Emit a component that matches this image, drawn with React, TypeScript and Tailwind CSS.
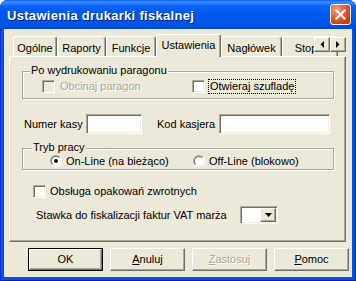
import React from "react";

const raised =
  "border border-t-white border-l-white border-r-[#716F64] border-b-[#716F64] shadow-[inset_-1px_-1px_0_#ACA899]";
const sunken =
  "border border-t-[#ACA899] border-l-[#ACA899] border-r-white border-b-white shadow-[inset_1px_1px_0_#716F64,inset_-1px_-1px_0_#F1EFE2]";
const etched =
  "border border-[#ACA899] shadow-[inset_1px_1px_0_#fff,1px_1px_0_#fff]";
const disabledText = "text-[#ACA899] [text-shadow:1px_1px_0_#fff]";

function Check({ disabled }: { disabled?: boolean }) {
  return (
    <div
      className={`h-[13px] w-[13px] shrink-0 ${sunken} ${disabled ? "bg-[#ECE9D8]" : "bg-white"}`}
    />
  );
}

function Radio({ checked }: { checked?: boolean }) {
  return (
    <div className="relative h-[12px] w-[12px] shrink-0 rounded-full border border-t-[#ACA899] border-l-[#ACA899] border-r-white border-b-white">
      <div className="flex h-full w-full items-center justify-center rounded-full border border-t-[#716F64] border-l-[#716F64] border-r-[#F1EFE2] border-b-[#F1EFE2] bg-white">
        {checked && <div className="h-[4px] w-[4px] rounded-full bg-black" />}
      </div>
    </div>
  );
}

function Tab({
  label,
  w,
  selected,
}: {
  label: string;
  w: string;
  selected?: boolean;
}) {
  return (
    <div
      className={`flex shrink-0 justify-center rounded-t-[3px] border-l border-t border-r border-l-white border-t-white border-r-[#716F64] shadow-[inset_-1px_0_0_#ACA899] bg-[#ECE9D8] ${w} ${
        selected
          ? "relative z-10 -mb-[1px] h-[23px] items-center pb-[1px]"
          : "h-[20px] items-center pt-[4px]"
      }`}
    >
      <span className="whitespace-nowrap">{label}</span>
    </div>
  );
}

function Button({
  children,
  def,
  disabled,
}: {
  children: React.ReactNode;
  def?: boolean;
  disabled?: boolean;
}) {
  const inner = (
    <div
      className={`flex h-full w-full items-center justify-center bg-[#ECE9D8] ${raised} ${disabled ? disabledText : ""}`}
    >
      {children}
    </div>
  );
  return (
    <div className={`h-[23px] w-[75px] shrink-0 ${def ? "border border-black" : ""}`}>
      {inner}
    </div>
  );
}

export default function App() {
  return (
    <div className="h-[281px] w-[356px] overflow-hidden bg-white font-['Liberation_Sans',Arial,sans-serif] text-[11px] leading-none text-black">
      <div className="flex h-full w-full flex-col rounded-t-[8px] bg-[#0055E5] shadow-[inset_1px_0_0_#0831D9,inset_-1px_0_0_#001EA0,inset_0_-1px_0_#001EA0]">
        {/* Title bar */}
        <div className="flex h-[29px] shrink-0 items-center justify-between rounded-t-[8px] bg-[linear-gradient(180deg,#0A5BE8_0%,#3D8EFF_7%,#2A7DFF_12%,#0A61F5_22%,#0058EE_45%,#0056EA_80%,#0049D4_100%)] pl-[7px] pr-[5px]">
          <span className="pt-[2px] text-[13px] font-bold tracking-[0.3px] text-white [text-shadow:1px_1px_0_#0A1E6E]">
            Ustawienia drukarki fiskalnej
          </span>
          <div className="flex h-[21px] w-[21px] items-center justify-center rounded-[3px] border border-white bg-[radial-gradient(circle_at_30%_25%,#F0A58C_0%,#E36A45_35%,#D2421C_70%,#C0300C_100%)]">
            <svg width="11" height="11" viewBox="0 0 11 11">
              <path
                d="M1.5 1.5 L9.5 9.5 M9.5 1.5 L1.5 9.5"
                stroke="white"
                strokeWidth="2.2"
                strokeLinecap="square"
              />
            </svg>
          </div>
        </div>

        {/* Client area */}
        <div className="mx-[4px] mb-[4px] flex flex-1 flex-col bg-[#ECE9D8] pt-[5px]">
          {/* Tab strip */}
          <div className="relative flex h-[22px] items-end pl-[9px]">
            <Tab label="Ogólne" w="w-[44px]" />
            <Tab label="Raporty" w="w-[49px]" />
            <Tab label="Funkcje" w="w-[50px]" />
            <Tab label="Ustawienia" w="w-[65px]" selected />
            <Tab label="Nagłówek" w="w-[61px]" />
            <Tab label="Stopki" w="w-[56px]" />
            <div className="absolute right-[6px] top-[3px] z-20 flex">
              <div className={`flex h-[15px] w-[16px] items-center justify-center bg-[#ECE9D8] ${raised}`}>
                <svg width="4" height="7" viewBox="0 0 4 7">
                  <path d="M4 0 L4 7 L0.5 3.5 Z" fill="black" />
                </svg>
              </div>
              <div className={`flex h-[15px] w-[16px] items-center justify-center bg-[#ECE9D8] ${raised}`}>
                <svg width="4" height="7" viewBox="0 0 4 7">
                  <path d="M0 0 L0 7 L3.5 3.5 Z" fill="black" />
                </svg>
              </div>
            </div>
          </div>

          {/* Panel */}
          <div className="ml-[5px] flex h-[186px] w-[337px] flex-col border border-t-white border-l-white border-r-[#716F64] border-b-[#716F64] bg-[#ECE9D8] shadow-[inset_-1px_-1px_0_#ACA899]">
            {/* Group 1 */}
            <div className={`relative ml-[12px] mt-[14px] h-[28px] w-[312px] ${etched}`}>
              <span className="absolute -top-[7px] left-[7px] bg-[#ECE9D8] px-[1px] whitespace-nowrap">
                Po wydrukowaniu paragonu
              </span>
              <div className="flex pl-[19px] pt-[7px]">
                <div className="flex w-[150px] items-center gap-[5px]">
                  <Check disabled />
                  <span className={disabledText}>Obcinaj paragon</span>
                </div>
                <div className="flex items-center gap-[3px]">
                  <Check />
                  <span className="border border-dotted border-black px-[1px] py-[1px] whitespace-nowrap">
                    Otwieraj szufladę
                  </span>
                </div>
              </div>
            </div>

            {/* Numer kasy row */}
            <div className="ml-[14px] mt-[15px] flex items-center">
              <span className="w-[62px]">Numer kasy</span>
              <div className={`h-[20px] w-[56px] bg-white ${sunken}`} />
              <span className="ml-[15px] w-[62px]">Kod kasjera</span>
              <div className={`h-[20px] w-[111px] bg-white ${sunken}`} />
            </div>

            {/* Group 2 */}
            <div className={`relative ml-[12px] mt-[14px] h-[22px] w-[312px] ${etched}`}>
              <span className="absolute -top-[7px] left-[9px] bg-[#ECE9D8] px-[1px] whitespace-nowrap">
                Tryb pracy
              </span>
              <div className="flex pl-[27px] pt-[6px]">
                <div className="flex w-[143px] items-center gap-[4px]">
                  <Radio checked />
                  <span className="whitespace-nowrap">On-Line (na bieżąco)</span>
                </div>
                <div className="flex items-center gap-[4px]">
                  <Radio />
                  <span className="whitespace-nowrap">Off-Line (blokowo)</span>
                </div>
              </div>
            </div>

            {/* Obsługa */}
            <div className="ml-[23px] mt-[15px] flex items-center gap-[4px]">
              <Check />
              <span>Obsługa opakowań zwrotnych</span>
            </div>

            {/* Stawka */}
            <div className="ml-[26px] mt-[8px] flex items-center">
              <span className="w-[204px] whitespace-nowrap">
                Stawka do fiskalizacji faktur VAT marża
              </span>
              <div className={`flex h-[18px] w-[38px] justify-end bg-white ${sunken} p-[1px]`}>
                <div className={`flex h-full w-[16px] items-center justify-center bg-[#ECE9D8] ${raised}`}>
                  <svg width="7" height="4" viewBox="0 0 7 4">
                    <path d="M0 0 L7 0 L3.5 4 Z" fill="black" />
                  </svg>
                </div>
              </div>
            </div>
          </div>

          {/* Buttons */}
          <div className="ml-[24px] mt-[6px] flex gap-[7px]">
            <Button def>OK</Button>
            <Button>
              <span>
                <span className="underline underline-offset-[1px]">A</span>nuluj
              </span>
            </Button>
            <Button disabled>
              <span>
                <span className="underline underline-offset-[1px]">Z</span>astosuj
              </span>
            </Button>
            <Button>
              <span>
                <span className="underline underline-offset-[1px]">P</span>omoc
              </span>
            </Button>
          </div>
        </div>
      </div>
    </div>
  );
}
